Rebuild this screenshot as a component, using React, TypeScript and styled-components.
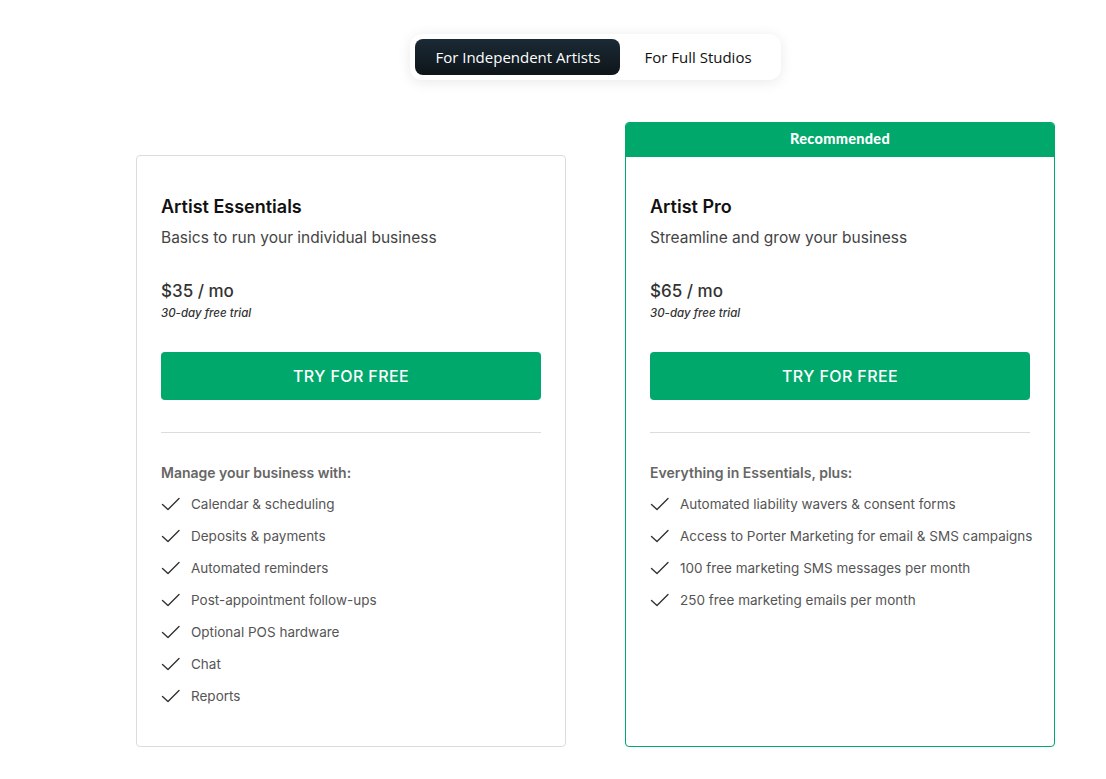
import React from "react";
import styled, { createGlobalStyle } from "styled-components";

const GlobalStyle = createGlobalStyle`
  * { box-sizing: border-box; }
  body {
    margin: 0;
    background: #fff;
    font-family: "Inter", "Liberation Sans", sans-serif;
  }
`;

const Page = styled.div`
  width: 919px;
  margin-left: 136px;
  padding-top: 34px;
`;

const ToggleRow = styled.div`
  display: flex;
  justify-content: center;
`;

const Toggle = styled.div`
  display: flex;
  align-items: center;
  padding: 5px;
  background: #fff;
  border-radius: 12px;
  box-shadow: 0 2px 14px rgba(0, 0, 0, 0.09);
`;

const ToggleButton = styled.button<{ $active?: boolean }>`
  height: 36px;
  padding: 0 ${(p) => (p.$active ? "20px" : "24px")};
  border: none;
  border-radius: 8px;
  font-family: "Open Sans", "Noto Sans", sans-serif;
  font-size: 15px;
  color: ${(p) => (p.$active ? "#fff" : "#111")};
  background: ${(p) =>
    p.$active ? "linear-gradient(180deg, #1b2a35 0%, #0e1519 100%)" : "transparent"};
  cursor: pointer;
`;

const Cards = styled.div`
  display: grid;
  grid-template-columns: 430px 430px;
  column-gap: 59px;
  align-items: end;
  margin-top: 42px;
`;

const Card = styled.div<{ $featured?: boolean }>`
  display: flex;
  flex-direction: column;
  border: 1px solid ${(p) => (p.$featured ? "#00a86b" : "#dcdcdc")};
  border-radius: 4px;
  overflow: hidden;
  height: ${(p) => (p.$featured ? "625px" : "592px")};
`;

const Banner = styled.div`
  height: 34px;
  padding-bottom: 4px;
  background: #00a86b;
  color: #fff;
  display: flex;
  align-items: center;
  justify-content: center;
  font-family: "Lato", sans-serif;
  font-weight: 900;
  font-size: 14.5px;
  letter-spacing: 0.3px;
`;

const Body = styled.div<{ $featured?: boolean }>`
  padding: ${(p) => (p.$featured ? "39px" : "40px")} 24px 0 24px;
`;

const Title = styled.h2`
  margin: 0;
  font-size: 18px;
  font-weight: 600;
  color: #111;
  line-height: 22px;
`;

const Subtitle = styled.p`
  margin: 10px 0 0;
  font-size: 15.5px;
  color: #444;
  line-height: 20px;
`;

const Price = styled.div`
  margin-top: 32px;
  font-size: 17px;
  font-weight: 500;
  color: #333;
  line-height: 22px;
`;

const Trial = styled.div`
  font-size: 11.5px;
  font-style: italic;
  font-weight: 500;
  color: #333;
  line-height: 14px;
  margin-top: 4px;
`;

const CtaButton = styled.button`
  display: block;
  width: 100%;
  height: 48px;
  margin-top: 32px;
  border: none;
  border-radius: 4px;
  background: #00a86b;
  color: #fff;
  font-family: inherit;
  font-size: 16px;
  font-weight: 500;
  letter-spacing: 0.4px;
  cursor: pointer;
`;

const Divider = styled.hr`
  margin: 32px 0 0;
  border: none;
  border-top: 1px solid #dcdcdc;
`;

const ListHeading = styled.div`
  margin-top: 31px;
  font-size: 14px;
  font-weight: 600;
  color: #666;
  line-height: 18px;
`;

const List = styled.ul`
  list-style: none;
  margin: 6px 0 0;
  padding: 0;
`;

const Item = styled.li`
  display: flex;
  align-items: center;
  height: 32px;
  font-size: 13.5px;
  color: #555;
  white-space: nowrap;
`;

const Check = styled.svg`
  width: 20px;
  height: 14px;
  margin-right: 10px;
  flex-shrink: 0;
`;

const CheckIcon = () => (
  <Check viewBox="0 0 20 14" fill="none">
    <path d="M1.5 7.5 L7 12.5 L18 1.5" stroke="#333" strokeWidth="1.4" strokeLinecap="round" strokeLinejoin="round" />
  </Check>
);

type Plan = {
  name: string;
  tagline: string;
  price: string;
  heading: string;
  features: string[];
  featured?: boolean;
};

const plans: Plan[] = [
  {
    name: "Artist Essentials",
    tagline: "Basics to run your individual business",
    price: "$35 / mo",
    heading: "Manage your business with:",
    features: [
      "Calendar & scheduling",
      "Deposits & payments",
      "Automated reminders",
      "Post-appointment follow-ups",
      "Optional POS hardware",
      "Chat",
      "Reports",
    ],
  },
  {
    name: "Artist Pro",
    tagline: "Streamline and grow your business",
    price: "$65 / mo",
    heading: "Everything in Essentials, plus:",
    features: [
      "Automated liability wavers & consent forms",
      "Access to Porter Marketing for email & SMS campaigns",
      "100 free marketing SMS messages per month",
      "250 free marketing emails per month",
    ],
    featured: true,
  },
];

const App: React.FC = () => (
  <>
    <GlobalStyle />
    <Page>
      <ToggleRow>
        <Toggle>
          <ToggleButton $active>For Independent Artists</ToggleButton>
          <ToggleButton>For Full Studios</ToggleButton>
        </Toggle>
      </ToggleRow>
      <Cards>
        {plans.map((plan) => (
          <Card key={plan.name} $featured={plan.featured}>
            {plan.featured && <Banner>Recommended</Banner>}
            <Body $featured={plan.featured}>
              <Title>{plan.name}</Title>
              <Subtitle>{plan.tagline}</Subtitle>
              <Price>{plan.price}</Price>
              <Trial>30-day free trial</Trial>
              <CtaButton>TRY FOR FREE</CtaButton>
              <Divider />
              <ListHeading>{plan.heading}</ListHeading>
              <List>
                {plan.features.map((f) => (
                  <Item key={f}>
                    <CheckIcon />
                    {f}
                  </Item>
                ))}
              </List>
            </Body>
          </Card>
        ))}
      </Cards>
    </Page>
  </>
);

export default App;
